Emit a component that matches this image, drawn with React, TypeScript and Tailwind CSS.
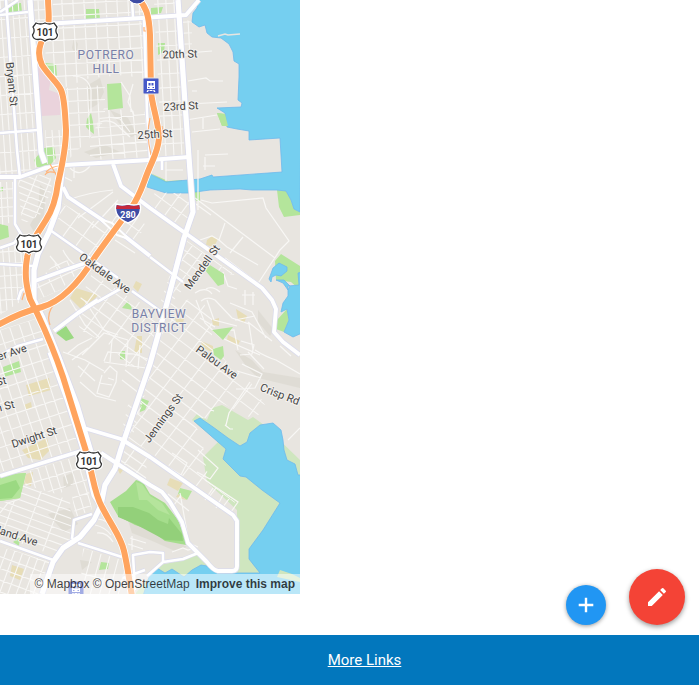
import { useId } from "react";

type StreetGridProps = {
  area: string;
  origin: [number, number];
  angle: number;
  along: number;
  across: number;
};

// A block pattern of minor streets, clipped to one neighbourhood.
function StreetGrid({ area, origin, angle, along, across }: StreetGridProps) {
  const id = useId();
  const lines: string[] = [];
  for (let i = -30; i <= 30; i++) {
    lines.push(`M${i * along} -260V260`);
    lines.push(`M-260 ${i * across}H260`);
  }
  return (
    <g clipPath={`url(#${id})`}>
      <clipPath id={id}>
        <polygon points={area} />
      </clipPath>
      <path
        d={lines.join("")}
        transform={`translate(${origin[0]} ${origin[1]}) rotate(${angle})`}
        stroke="#f8f7f5"
        strokeWidth="1.100"
        fill="none"
      />
    </g>
  );
}

const grids: StreetGridProps[] = [
  { area: "0,0 30,0 41,165 20,175 0,175", origin: [6, 0], angle: -4, along: 6, across: 19 },
  { area: "33,0 45,0 47,25 38,45 37,60 33,60", origin: [38, 0], angle: -3, along: 7, across: 10 },
  { area: "54,0 142,0 147,80 125,75 90,78 63,88 50,70 45,62 47,25", origin: [62, 4], angle: -3, along: 11, across: 12 },
  { area: "66,88 105,85 105,120 88,140 68,160", origin: [73, 5], angle: -3, along: 10, across: 12 },
  { area: "104,108 147,112 150,157 90,160 90,140", origin: [100, 10], angle: -5, along: 12, across: 9 },
  { area: "154,0 176,0 185,155 163,157 160,120", origin: [158, 4], angle: -3, along: 8, across: 14 },
  { area: "182,18 192,22 192,55 184,60", origin: [187, 0], angle: -3, along: 10, across: 11 },
  { area: "45,130 62,130 62,160 47,164", origin: [50, 2], angle: -4, along: 7, across: 9 },
  { area: "0,182 13,182 14,222 0,225", origin: [3, 0], angle: -3, along: 6, across: 9 },
  { area: "18,180 50,172 52,190 40,215 22,225", origin: [20, 180], angle: 22, along: 14, across: 6 },
  { area: "0,248 15,244 27,255 23,300 0,315", origin: [2, 240], angle: -4, along: 6, across: 12 },
  { area: "36,283 58,260 90,262 60,290 38,300", origin: [40, 260], angle: -25, along: 12, across: 12 },
  { area: "62,203 102,226 118,232 90,260 54,232", origin: [66, 205], angle: 36, along: 16, across: 15 },
  { area: "110,225 122,205 146,225 134,245", origin: [110, 225], angle: 36, along: 9, across: 12 },
  { area: "155,192 190,194 190,210 184,232 150,205", origin: [152, 192], angle: 36, along: 12, across: 12 },
  { area: "183,238 207,255 235,275 200,270 165,310 161,300", origin: [183, 238], angle: 36, along: 12, across: 9 },
  { area: "163,305 200,297 212,318 212,345 232,368 248,378 265,405 255,420 222,403 207,418 192,419 203,440 204,458 210,483 235,502 232,512 150,452 125,437 152,365", origin: [166, 300], angle: 37, along: 17, across: 12 },
  { area: "92,273 125,295 161,313 146,365 130,368 110,345 80,330 75,310", origin: [90, 275], angle: 36, along: 14, across: 12 },
  { area: "0,330 38,318 58,365 82,450 40,460 0,472", origin: [0, 330], angle: -18, along: 10, across: 14 },
  { area: "128,405 145,395 133,435 122,430", origin: [128, 405], angle: 37, along: 12, across: 9 },
  { area: "30,470 83,455 92,510 75,517 70,480 60,495 25,485", origin: [30, 470], angle: -17, along: 8, across: 13 },
  { area: "22,485 70,500 72,540 53,555 0,536 0,503 20,500", origin: [20, 485], angle: 20, along: 22, across: 7 },
  { area: "0,546 50,562 38,594 0,594", origin: [0, 545], angle: 20, along: 8, across: 11 },
  { area: "83,548 122,560 126,594 80,594", origin: [84, 548], angle: 15, along: 9, across: 25 },
  { area: "125,440 147,453 146,480 118,460", origin: [123, 440], angle: 35, along: 15, across: 9 },
];

const minorStreets =
  "M73 76Q88 76 91 90V112M100 122Q112 118 120 128L130 137M121 82L130 96 131 112M133 84L128 102 134 115M108 117L120 119 130 132M188 81L206 78 210 81H223M187 53L212 51M188 104L227 102M186 120L217 115M192 132L220 129M192 91H197M203 117V129M166 157V181M166 170H183M198 150V210M205 155L228 154M203 166H215M205 157V170M201 200L212 203 263 198 266 208 289 241 280 250 257 285M195 198L275 258M193 202L211 215M225 223L219 240 227 247 258 265M219 240L212 236 200 240M243 237L230 253M68 200Q90 192 113 190M62 176L72 181M74 166V178M70 168Q80 178 90 166M78 218L113 192M92 228L118 200M135 253L115 240M56 235L70 245M63 250Q70 265 85 270M50 256L60 268M70 300L85 325 99 337M85 301L104 330 118 335M82 355L104 333 128 340M63 352L85 360 104 371M78 366L95 381M80 382L96 396 116 401M90 362L80 377M67 354L78 345 92 338M72 360L88 348M104 361L108 352 134 354 150 360M112 340L110 362M128 340L126 367M140 345L138 369M104 362L146 368M104 373L110 366 117 372 116 382 109 397 97 393 102 375M99 383L112 385M108 378L114 380M122 380L144 397M125 370L143 384M196 300L205 323 220 337 237 345 260 355M207 300L214 320 237 326M215 300L232 318 249 324 253 350M220 331L234 330 238 350M200 318L215 327M235 320L255 316M241 341L254 345 252 354 240 355M230 303L252 312 266 338M248 322L272 341M255 350Q266 357 276 360L300 374M242 364L262 374 255 388 236 389M237 371L261 378M226 425L229 413 250 382M225 425L230 429 233 429M280 346L291 356M248 352L264 369M288 440L300 428M198 450L218 468 210 479 197 472M172 453L187 463 181 475 166 466M205 480L238 502 231 512M213 488L205 500M223 495L216 508M180 493L189 543 198 547M168 494L189 511M174 505L181 495M172 552L183 548 188 550 195 548M95 525Q105 527 111 535M98 519Q108 520 114 529M97 533Q107 532 113 542M130 538L146 543M128 544L143 549M132 536V550M0 513L8 503 20 499M195 293Q206 286 212 294M201 301Q207 296 215 300M206 289Q212 285 220 292M223 272L228 286 237 289M225 258L258 283M242 295H255M245 290V305M253 292V305";

const thinRoads =
  "M6 0L17 150 20 178M0 15L28 12M0 133L38 130M15 179L15 224 21 234 14 243 0 248M0 264L33 266M50 230L80 251 118 278M132 291L163 313M150 257L183 282M0 355L18 346 43 339M18 300L21 291 28 286M97 302L120 289M132 0L133 17M144 20L147 112 150 158M0 541L53 560M92 514L74 520 72 539M78 543L122 557M123 578L145 570M135 590L133 555 150 552 163 553V562L147 576M163 562L183 559 198 553M0 12L18 0M162 160L162 170";

const mainRoads =
  "M45 24L142 18 186 15 199 0M0 177L20 177 45 168 65 165 150 160 189 157M63 187L68 197 101 219 127 238 150 256M113 164L121 186 150 208 188 235 262 288 272 300 276 309 274 332 283 342 300 355M35 281L65 270 94 260M54 331L78 313 98 300M84 428L121 439 150 457 233 515 237 521V566Q237 571 232 571H218Q213 570 207 562L188 543 182 522 170 502 162 492 150 485 101 453M0 476L81 451";

const arterials =
  "M30 0L41 152 45 163M178 0L185 103 193 212 184 238 167 303 150 364 121 449 115 469 105 485 101 505 94 520 80 537 63 548 53 562 42 594M62 172L58 208 49 232 38 254 34 270 34 300 43 318 58 355 77 405 91 452M50 352L67 399 84 452 94 495 101 506";

const ramps =
  "M56 173Q48 170 45 175M60 166Q52 166 46 172M50 164L58 178M22 300L24 293 28 296M50 325Q45 312 58 300M0 321Q20 309 33 312M144 27V31H150M150 118Q146 135 151 155M162 126Q164 140 155 155";

const route101 =
  "M48 -2C48 12 51 21 45 35C38 46 37 55 42 65C49 76 58 83 61 90C65 99 65 116 66 130C66 150 61 170 58 183C56 199 52 211 46 220C38 233 29 244 27 258C24 276 27 288 30 299L37 313C47 334 55 353 63 377L85 448C93 474 94 494 102 507C114 530 121 537 124 551C128 568 129 580 132 596";
const route280 =
  "M136 -4C146 6 149 14 150 35L151 91C152 107 158 118 159 138C158 151 154 157 149 169C142 186 140 196 131 208C116 228 107 240 95 257C82 278 63 301 42 307C30 310 14 316 -2 325";

function Shield101({ x, y }: { x: number; y: number }) {
  return (
    <g transform={`translate(${x} ${y})`}>
      <path
        d="M-9-9Q-4.500-7 0-9Q4.500-7 9-9L12-5Q9.500-1 12.500 3Q12 7.500 7 7.500Q3 6.500 0 9Q-3 6.500-7 7.500Q-12 7.500-12.500 3Q-9.500-1-12-5Z"
        fill="white"
        stroke="white"
        strokeWidth="3.500"
      />
      <path
        d="M-9-9Q-4.500-7 0-9Q4.500-7 9-9L12-5Q9.500-1 12.500 3Q12 7.500 7 7.500Q3 6.500 0 9Q-3 6.500-7 7.500Q-12 7.500-12.500 3Q-9.500-1-12-5Z"
        fill="white"
        stroke="#333"
        strokeWidth="1.300"
      />
      <text y="3.500" textAnchor="middle" className="fill-[#333] text-[10px] font-bold">
        101
      </text>
    </g>
  );
}

function RailIcon({ x, y }: { x: number; y: number }) {
  return (
    <g transform={`translate(${x} ${y})`}>
      <rect width="16" height="16" rx="1" fill="#4558c8" stroke="#e8e5e0" strokeWidth="1" />
      <path
        fillRule="evenodd"
        fill="white"
        d="M4 3H12V11H4ZM5.500 5V7.500H7.500V5ZM8.500 5V7.500H10.500V5ZM5 9V10H6.500V9ZM9.500 9V10H11V9ZM4.500 12H6L5 14H3.500ZM10 12H11.500L12.500 14H11ZM6.500 12H9.500V13H6.500Z"
      />
    </g>
  );
}

const streetLabels = [
  { text: "Bryant St", x: 12, y: 84, angle: 84 },
  { text: "20th St", x: 180, y: 54, angle: -2 },
  { text: "23rd St", x: 181, y: 106, angle: -3 },
  { text: "25th St", x: 155, y: 134, angle: -3 },
  { text: "Oakdale Ave", x: 105, y: 273, angle: 36 },
  { text: "Mendell St", x: 202, y: 267, angle: -54 },
  { text: "Palou Ave", x: 217, y: 362, angle: 36 },
  { text: "Crisp Rd", x: 280, y: 394, angle: 21 },
  { text: "Jennings St", x: 163, y: 418, angle: -54 },
  { text: "Dwight St", x: 34, y: 437, angle: -18 },
  { text: "er Ave", x: 12, y: 352, angle: -18 },
  { text: "St", x: 1, y: 381, angle: -14 },
  { text: "n St", x: 5, y: 406, angle: -14 },
  { text: "eland Ave", x: 15, y: 535, angle: 18 },
];

const districtLabels = [
  { text: "POTRERO", x: 106, y: 59 },
  { text: "HILL", x: 106, y: 73 },
  { text: "BAYVIEW", x: 159, y: 318 },
  { text: "DISTRICT", x: 159, y: 332 },
];

function CityMap() {
  return (
    <svg
      viewBox="0 0 300 594"
      className="block h-full w-full font-['Roboto',sans-serif]"
      role="img"
      aria-label="Map of San Francisco"
    >
      <rect width="300" height="594" fill="#e8e5e0" />

      <g fill="#dcd9d0" opacity="0.7">
        <path d="M40 185L46 190 44 215 34 232 30 225 38 210Z" />
        <path d="M74 38L78 44 76 55 72 48ZM88 85L100 78 104 92 98 104 88 110ZM84 152L105 145 120 152 96 158Z" />
        <path d="M110 110L128 118 137 135 131 137 118 122Z" />
        <path d="M235 350L252 360 263 372 300 378V388L275 382 258 378 246 366ZM258 310L274 330 270 336 258 322Z" />
        <path d="M63 477L74 472 73 485 64 488ZM48 514L70 508 78 524 64 532Z" />
        <path d="M128 520L150 528 187 547 175 551 150 540 132 533Z" />
        <path d="M80 560L92 562 82 570Z" />
      </g>

      <g fill="#b4e59b">
        <path d="M8 4L21 3 22 12 9 13ZM86 9L99 9 100 19 86 20ZM45 63L56 64 57 76 46 69ZM87 119L91 113 93 122 94 134 90 131 86 127ZM44 148L54 147 56 158 48 168 37 167 34 160ZM151 8L163 7 161 13 151 15ZM158 43L165 43 164 52 158 55Z" />
        <path d="M217 113L225 114 228 126 222 126ZM150 173L168 181 182 180V182L165 183ZM195 191H200V202L195 200Z" />
        <path d="M277 190L286 191 291 200 294 209 300 212V215L284 217 279 207ZM0 187H3V191L0 192ZM0 224L8 226 9 237 0 240Z" />
        <path d="M3 367L19 361 21 372 4 377ZM122 308L128 301 133 310ZM120 351H125V360L120 359ZM141 398L149 401 145 410 140 412Z" />
        <path d="M275 261L281 254 300 266V290L291 282 276 280ZM277 320L287 309 289 320 284 332 276 329Z" />
        <path d="M0 475L26 473 20 498 0 501ZM13 542L20 537 19 546ZM101 562L109 563 108 569 99 570ZM180 488L192 491 187 500 178 494Z" />
      </g>

      <path
        fill="#cfe6bf"
        d="M192 420L197 414 207 420 212 408 222 405 248 420 253 417 264 425 300 460V594H135L160 565 183 560 198 554 213 572H237V510L207 482 203 457 218 442Z"
      />

      <g fill="#e7ddb7">
        <path d="M26 385L49 378 51 390 29 396ZM24 405L31 402 32 408 26 410ZM22 450L47 438 50 450 40 460 28 458ZM137 336L142 336 142 353 134 352ZM207 240L212 236 218 239 214 247 206 245ZM70 298L76 288 98 295 92 302 82 310ZM136 281L142 284 138 292 133 287Z" />
        <path d="M236 309L247 316 244 323 238 319ZM212 320L219 318 219 326 213 325ZM201 341L213 346 213 353 202 347ZM228 335L240 341 238 345 227 340ZM175 318L184 319 183 323 176 322ZM170 478L183 483 178 491 167 485ZM178 494L187 500 186 500 176 497ZM26 474L33 472 31 486 24 484ZM12 565L24 569 20 580 10 576ZM117 468L124 469 120 474Z" />
      </g>
      <path fill="#ead3dc" d="M37 65L45 70 51 77 49 90 60 94 60 115 41 116Z" />

      <g fill="#75cff0" stroke="#6fb9ec" strokeWidth="0.800">
        <path d="M198-2L197 8 193 13 192 22 199 27 205 25 207 33 212 37 221 38 229 44 233 52 234 61 239 64 239 77 238 100 242 103 241 107 217 108 225 113 227 127 237 129 249 131 249 140 280 138 282 172 213 177 212 175 200 179 177 181 166 182 150 174 147 187 166 193 188 193 210 190 240 189 252 190 277 190 286 191 291 200 294 209 300 212 302-2Z" />
        <path d="M279 263L287 267 287 271 281 276 276 275 272 277 271 282 269 279 273 268ZM302 272L298 273 299 285 288 286 288 296 283 303 281 312 287 309 289 320 284 332 293 337 302 333ZM276 280L284 280 290 286 288 290 283 283Z" />
        <path d="M194 421L200 418 213 427 228 438 240 446 247 442 250 433 260 425 273 423 281 430 283 440 284 450 287 460 295 464 298 475 302 475V596H143L150 574 157 568 165 573 172 569 184 577 192 570 201 565 213 567 225 573 260 573 249 559 249 549 263 530 280 503 262 490 246 477 240 476 230 466 223 459 226 449Z" />
      </g>
      <path fill="#b4e59b" d="M217 113L225 114 228 126 222 126Z" />
      <path fill="#cfe6bf" d="M277 577L280 570 292 574 300 578V582Z" />
      <path d="M218 36L225 34 228 35 240 34" stroke="#e8e5e0" strokeWidth="1.500" fill="none" />

      {grids.map((grid) => (
        <StreetGrid key={grid.area} {...grid} />
      ))}
      <path d={minorStreets} fill="none" stroke="#f8f7f5" strokeWidth="1.200" />

      <g fill="#b4e59b">
        <path d="M107 84L121 83 123 108 108 110ZM205 270L210 265 224 274V284L218 286ZM212 330L233 327 223 340ZM213 349L223 346 224 356 221 360 214 355Z" />
        <path d="M0 475L26 473 20 498 0 501Z" />
      </g>
      <path fill="#a5dd8c" d="M110 502L126 491 136 480 143 482 150 494 165 503 178 520 184 535 186 545 165 541 150 530 135 525 118 516Z" />
      <path fill="#93d07a" d="M118 507L133 507 149 513 158 520 168 524 169 518 182 534 183 541 165 540 150 532 135 524 118 517Z" />
      <path fill="#b5e49c" d="M136 482L142 484 150 496 162 503 170 515 158 510 147 500 139 500Z" />
      <path fill="#9bd982" d="M56 333L66 326 74 338 66 341ZM0 485L16 480 20 488 12 498 0 499Z" />

      <g fill="none" strokeLinejoin="round">
        <path d={thinRoads} stroke="#dbdcec" strokeWidth="4" />
        <path d={mainRoads} stroke="#dbdcec" strokeWidth="5.400" />
        <path d={arterials} stroke="#d9daec" strokeWidth="6.800" />
        <path d={thinRoads} stroke="white" strokeWidth="2.600" />
        <path d={mainRoads} stroke="white" strokeWidth="3.900" />
        <path d={arterials} stroke="white" strokeWidth="5.200" />
        <path d="M100 219L112 223 129 239 117 235Z" fill="#e8e5e0" stroke="white" strokeWidth="2" />
        <path d={ramps} stroke="#ffb47b" strokeWidth="1.200" />
        <path d={route101} stroke="white" strokeWidth="7.600" />
        <path d={route280} stroke="white" strokeWidth="7.600" />
        <path d={route101} stroke="#ffa45e" strokeWidth="6" />
        <path d={route280} stroke="#ffa45e" strokeWidth="6" />
      </g>

      {streetLabels.map((label) => (
        <text
          key={`${label.text}-${label.y}`}
          transform={`translate(${label.x} ${label.y}) rotate(${label.angle})`}
          y="4"
          textAnchor="middle"
          className="fill-[#454545] stroke-[#f4f2ef] stroke-2 text-[11px] [paint-order:stroke]"
        >
          {label.text}
        </text>
      ))}
      {districtLabels.map((label) => (
        <text
          key={label.text}
          x={label.x}
          y={label.y}
          textAnchor="middle"
          className="fill-[#7880a8] stroke-[#f0eeeb] stroke-2 text-xs tracking-wider [paint-order:stroke]"
        >
          {label.text}
        </text>
      ))}

      <Shield101 x={45} y={32} />
      <Shield101 x={29} y={244} />
      <Shield101 x={89} y={461} />
      <circle cx="137" cy="-6" r="10" fill="#3f4da5" stroke="white" />
      <g transform="translate(128 213)">
        <path d="M-12-9Q-6-7 0-9Q6-7 12-9Q15 4 0 10Q-15 4-12-9Z" fill="#3f4da5" stroke="white" strokeWidth="1.500" />
        <path d="M-11-8Q-6-6 0-8Q6-6 11-8L12-4H-12Z" fill="#c5283c" />
        <text y="4.500" textAnchor="middle" className="fill-white text-[9px] font-bold">
          280
        </text>
      </g>
      <RailIcon x={143} y={78} />
      <RailIcon x={68} y={581} />
    </svg>
  );
}

export default function App() {
  return (
    <div className="flex min-h-screen flex-col bg-white font-['Roboto',sans-serif]">
      <main className="flex flex-1">
        <section className="relative h-[594px] w-[300px] shrink-0 overflow-hidden">
          <CityMap />
          <div className="absolute right-0 bottom-0 flex h-5 gap-1.5 bg-white/50 px-[5px] font-['Liberation_Sans',sans-serif] text-xs leading-5 whitespace-nowrap text-black/75">
            <span>
              <a href="#mapbox">© Mapbox</a> <a href="#openstreetmap">© OpenStreetMap</a>
            </span>
            <a href="#improve" className="font-bold">
              Improve this map
            </a>
          </div>
        </section>
        <div className="flex flex-1 items-end justify-end gap-[23px] pr-3.5 pb-2.5">
          <button
            type="button"
            aria-label="Add"
            className="flex size-10 items-center justify-center rounded-full bg-[#2196f3] text-white shadow-[0_1px_4px_rgba(0,0,0,0.4)]"
          >
            <svg viewBox="0 0 24 24" className="size-6" fill="currentColor" aria-hidden="true">
              <path d="M19.300 13.200H13.200V19.300H10.800V13.200H4.700V10.800H10.800V4.700H13.200V10.800H19.300Z" />
            </svg>
          </button>
          <button
            type="button"
            aria-label="Edit"
            className="flex size-14 items-center justify-center rounded-full bg-[#f44336] text-white shadow-[0_2px_5px_rgba(0,0,0,0.4)]"
          >
            <svg viewBox="0 0 24 24" className="size-6" fill="currentColor" aria-hidden="true">
              <path d="M3 17.250V21h3.750L17.810 9.940l-3.750-3.750L3 17.250zM20.710 7.040a1 1 0 0 0 0-1.410l-2.340-2.340a1 1 0 0 0-1.410 0l-1.830 1.830 3.750 3.750 1.830-1.830z" />
            </svg>
          </button>
        </div>
      </main>
      <footer className="flex h-[50px] items-center justify-center bg-[#0277bd] pl-[30px]">
        <a href="#links" className="text-[15px] leading-6 text-white underline">
          More Links
        </a>
      </footer>
    </div>
  );
}
